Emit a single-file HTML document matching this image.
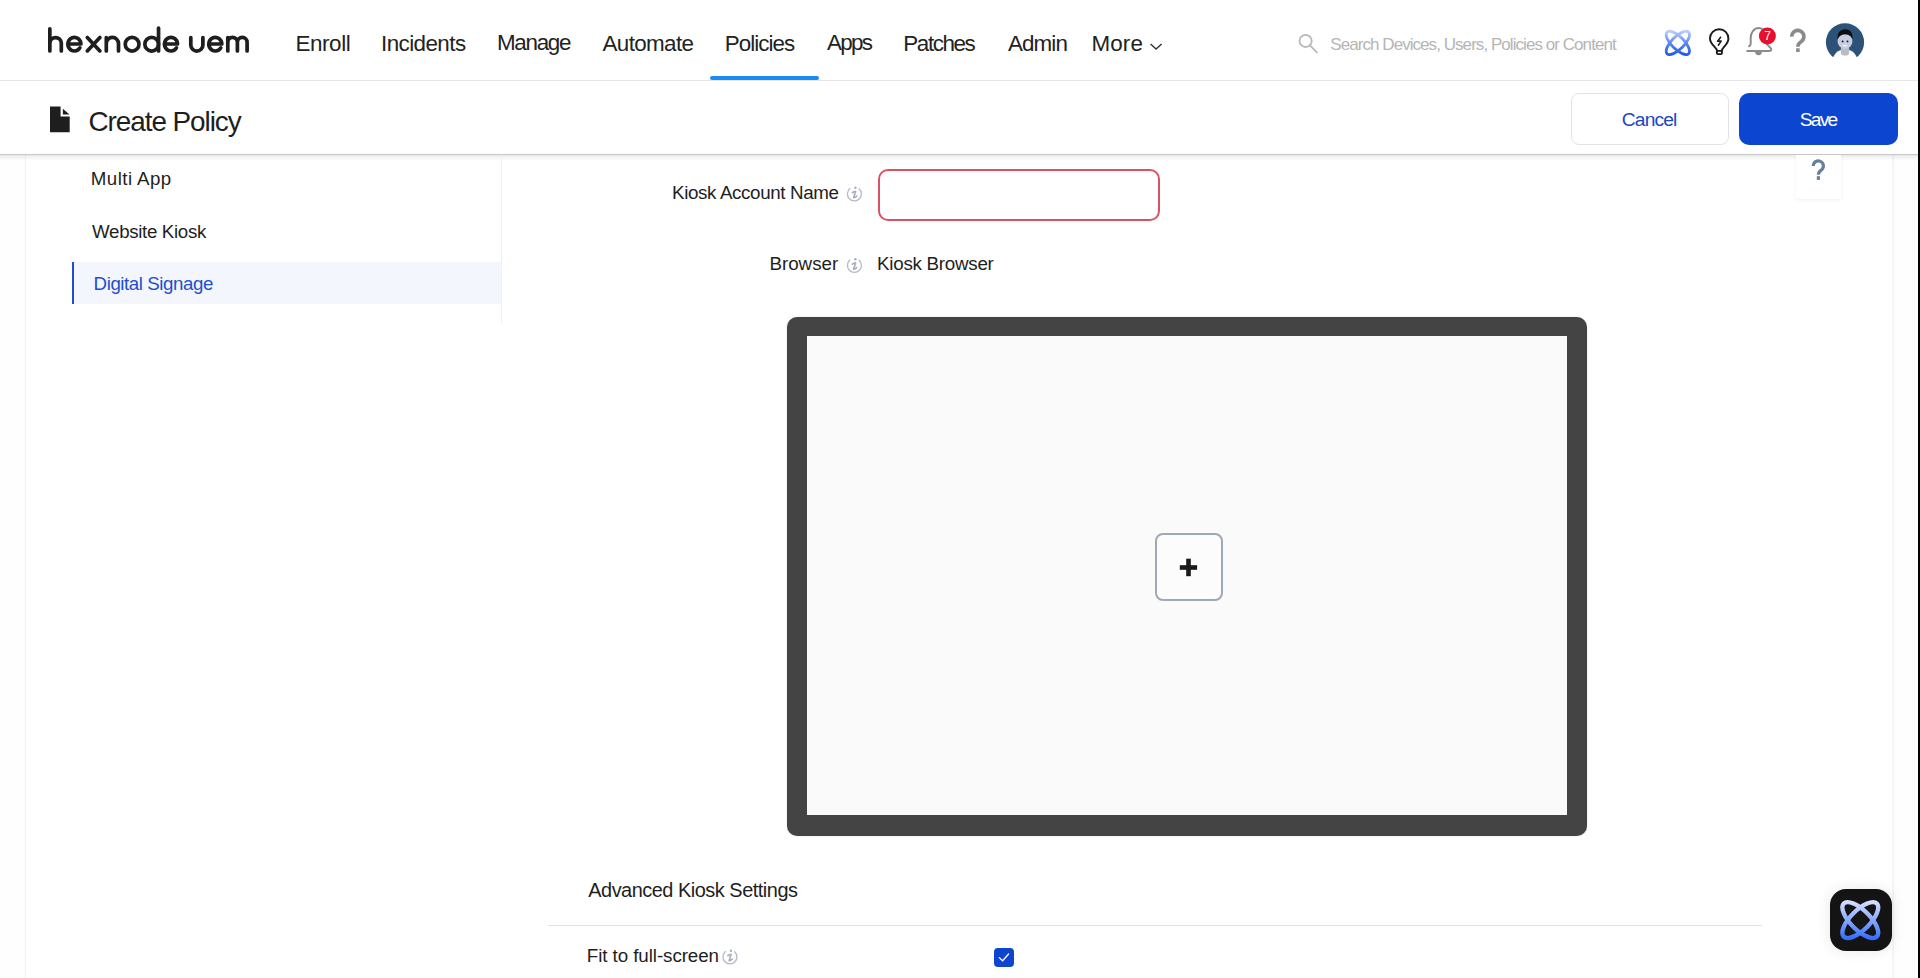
<!DOCTYPE html>
<html>
<head>
<meta charset="utf-8">
<title>Create Policy - Hexnode UEM</title>
<style>
html,body{margin:0;padding:0;}
body{width:1920px;height:978px;overflow:hidden;position:relative;background:#ffffff;font-family:"Liberation Sans",sans-serif;}
.t{position:absolute;white-space:nowrap;line-height:1;font-family:"Liberation Sans",sans-serif;}
.abs{position:absolute;}
#topnav{position:absolute;left:0;top:0;width:1918px;height:80px;background:#fff;border-bottom:1px solid #e6e6e6;}
#navbar-active{position:absolute;left:710px;top:76px;width:109px;height:4px;border-radius:2px;background:#1b8bf2;}
#subhead{position:absolute;left:0;top:81px;width:1918px;height:73px;background:#fff;}
#subhead-line{position:absolute;left:0;top:154px;width:1918px;height:1px;background:#c9c9c9;}
#subhead-shadow{position:absolute;left:0;top:155px;width:1918px;height:6px;background:linear-gradient(to bottom, rgba(0,0,0,0.10) 0px, rgba(0,0,0,0.055) 1.5px, rgba(0,0,0,0.035) 3px, rgba(0,0,0,0.015) 4.5px, rgba(0,0,0,0) 6px);}
#leftgutter{position:absolute;left:0;top:155px;width:25px;height:823px;background:#fefefe;}
#panel{position:absolute;left:25px;top:155px;width:1866px;height:823px;background:#fff;border-left:1px solid #f2f2f2;border-right:2px solid #f5f5f5;box-shadow:0 0 3px rgba(0,0,0,0.025);}
#rightgutter{position:absolute;left:1894px;top:155px;width:24px;height:823px;background:#fefefe;}
#sideborder{position:absolute;left:501px;top:155px;width:1px;height:168px;background:#eef0f3;}
#active-item{position:absolute;left:72px;top:262px;width:429px;height:42px;background:#f3f6fc;}
#active-bar{position:absolute;left:72px;top:262px;width:2px;height:42px;background:#1d4fd0;}
#edge{position:absolute;left:1918px;top:0;width:2px;height:978px;background:#000;}
#cancel{position:absolute;left:1571px;top:93px;width:156px;height:50px;border:1px solid #e3e3e3;border-radius:8px;background:#fff;}
#save{position:absolute;left:1739px;top:93px;width:159px;height:52px;border-radius:10px;background:#0c45d0;}
#input{position:absolute;left:877.5px;top:169px;width:278px;height:48px;border:2px solid #db5266;border-radius:10px;background:#fff;}
#frame{position:absolute;left:787px;top:317px;width:800px;height:519px;border-radius:10px;background:#444444;box-shadow:0 0 2px rgba(0,0,0,0.15);}
#screen{position:absolute;left:807px;top:336px;width:760px;height:479px;background:#fafafa;}
#plusbtn{position:absolute;left:1155px;top:533px;width:64px;height:64px;border:2px solid #a0a7b8;border-radius:8px;background:#fcfcfc;}
#divider{position:absolute;left:548px;top:925px;width:1214px;height:1px;background:#e3e3e3;}
#checkbox{position:absolute;left:994px;top:948px;width:20px;height:19px;border-radius:4px;background:#0d45d0;}
#helpbox{position:absolute;left:1796px;top:155px;width:45px;height:44px;background:#fff;box-shadow:0 1px 4px rgba(0,0,0,0.06);}
#chatbtn{position:absolute;left:1829.5px;top:889px;width:62px;height:62px;border-radius:16px;background:#141414;box-shadow:0 0 14px rgba(0,0,0,0.10);}
</style>
</head>
<body>
<div id="topnav"></div>
<div id="navbar-active"></div>
<div id="subhead"></div>
<div id="leftgutter"></div>
<div id="rightgutter"></div>
<div id="panel"></div>
<div id="subhead-line"></div>
<div id="subhead-shadow"></div>
<div id="sideborder"></div>
<div id="active-item"></div>
<div id="active-bar"></div>
<div id="cancel"></div>
<div id="save"></div>
<div id="input"></div>
<div id="frame"></div>
<div id="screen"></div>
<div id="plusbtn"></div>
<div id="divider"></div>
<div id="checkbox"></div>
<div id="helpbox"></div>
<div id="chatbtn"></div>
<svg class="abs" style="left:0;top:0;overflow:visible" width="1920" height="978" viewBox="0 0 1920 978">
<defs>
<linearGradient id="gAtom" gradientUnits="userSpaceOnUse" x1="0" y1="30" x2="0" y2="56">
<stop offset="0" stop-color="#c3d2fb"/>
<stop offset="0.5" stop-color="#5b88f5"/>
<stop offset="1" stop-color="#1d55ea"/>
</linearGradient>
<linearGradient id="gAtom2" gradientUnits="userSpaceOnUse" x1="0" y1="900" x2="0" y2="941">
<stop offset="0" stop-color="#dbe3ff"/>
<stop offset="0.45" stop-color="#90aefc"/>
<stop offset="1" stop-color="#2a66ff"/>
</linearGradient>
</defs>
<!-- logo -->
<g fill="none" stroke="#1e1e1e" stroke-width="3.7" stroke-linecap="round" stroke-linejoin="round">
<path d="M49.85,28.8 V51 M49.85,43.1 A5.73,5.73 0 0 1 61.3,43.1 V51"/>
<path d="M67.9,44 H80.9 A6.5,6.85 0 1 0 79.85,47.9"/>
<path d="M87.3,37.5 L99.9,50.9 M99.9,37.5 L87.3,50.9"/>
<path d="M106.3,37.5 V51 M106.3,43.5 A6.1,6.1 0 0 1 118.5,43.5 V51"/>
<ellipse cx="132.1" cy="44.2" rx="6.87" ry="6.85"/>
<ellipse cx="151.7" cy="44.2" rx="6.85" ry="6.85"/>
<path d="M158.55,28.2 V51"/>
<path d="M164.6,44 H177.5 A6.5,6.85 0 1 0 176.45,47.9"/>
<path d="M190.8,37.6 V45 A6.05,6.05 0 0 0 202.9,45 V37.6"/>
<path d="M208.8,44 H221.8 A6.5,6.85 0 1 0 220.75,47.9"/>
<path d="M227.8,37.5 V51 M227.8,42.2 A4.8,4.8 0 0 1 237.4,42.2 V51 M237.4,42.2 A4.85,4.85 0 0 1 247.1,42.2 V51"/>
</g>
<!-- More chevron -->
<path d="M1150.6,44 L1156.1,49 L1161.6,44" fill="none" stroke="#333" stroke-width="1.4"/>
<!-- search icon -->
<g fill="none" stroke="#b9b9b9" stroke-width="1.8" stroke-linecap="round">
<circle cx="1305.6" cy="40.9" r="6.1"/>
<path d="M1310.2,45.6 L1316.9,52.3"/>
</g>
<!-- atom header -->
<g fill="none" stroke="url(#gAtom)" stroke-width="2.8">
<path d="M1667.10,32.15 A15.2,6.3 45 0 1 1688.60,53.65 A15.2,6.3 45 0 1 1667.10,32.15 Z"/>
<path d="M1667.10,53.65 A15.2,6.3 -45 0 1 1688.60,32.15 A15.2,6.3 -45 0 1 1667.10,53.65 Z"/>
</g>
<!-- bulb -->
<g fill="none" stroke="#1a1a1a" stroke-width="1.9" stroke-linecap="round" stroke-linejoin="round">
<path d="M1716.9,50.5 C1716.9,47.6 1710,44.6 1710,38.5 A9.2,9.3 0 0 1 1728.4,38.5 C1728.4,44.6 1721.9,47.6 1721.9,50.5"/>
<path d="M1716.9,50.9 V53 Q1716.9,54.1 1718,54.1 H1720.8 Q1721.9,54.1 1721.9,53 V50.9 Z"/>
<path d="M1720.6,37.2 L1717.6,41.3 L1721.2,41.1 L1718.3,45.2" stroke-width="1.5"/>
</g>
<!-- bell -->
<g fill="none" stroke="#8c8c8c" stroke-width="2" stroke-linecap="round" stroke-linejoin="round">
<path d="M1749.2,46.2 Q1750.7,45.4 1750.7,43.5 V37.6 A8,9.6 0 0 1 1766.7,37.6 V43.8 L1770.9,48.4 Q1771.9,50.9 1769.6,50.9 H1747.2"/>
</g>
<path d="M1755.1,51.5 A3.4,3.8 0 0 0 1761.9,51.5 Z" fill="#8c8c8c"/>
<circle cx="1767.4" cy="35.9" r="8.5" fill="#e8112d"/>
<text x="1767.6" y="40.2" font-family="Liberation Sans" font-size="12" fill="#fff" text-anchor="middle">7</text>
<!-- header question -->
<g fill="none" stroke="#8a8a8a" stroke-width="3.6">
<path d="M1791.8,36.6 A6.05,6.1 0 1 1 1801.3,41.5 Q1797.9,43.6 1797.9,46.8"/>
</g>
<rect x="1796.1" y="48.3" width="3.6" height="3.7" fill="#8a8a8a"/>
<!-- avatar -->
<circle cx="1845" cy="42.3" r="19.1" fill="#2c5377"/>
<circle cx="1845" cy="61.7" r="12.5" fill="#ffffff"/>
<rect x="1820" y="58.2" width="50" height="8" fill="#ffffff"/>
<rect x="1840.8" y="46" width="8.4" height="9.5" rx="3" fill="#b9bdc7"/>
<ellipse cx="1845" cy="41.6" rx="7.4" ry="7.4" fill="#c8cde0"/>
<path d="M1837.6,39.5 C1836.8,32.5 1841,29 1845.5,29.3 C1850.2,29.5 1853.2,33 1852.4,39 C1851.2,35.3 1848.6,34.2 1845,34.2 C1841.5,34.2 1839,35.6 1837.6,39.5 Z" fill="#0e0e0e"/>
<circle cx="1842.6" cy="41.4" r="0.95" fill="#111"/>
<circle cx="1847.5" cy="41.4" r="0.95" fill="#111"/>
<path d="M1842.4,45 Q1845,48.2 1847.7,45 Z" fill="#f4f6fb"/>
<!-- doc icon -->
<path d="M50,106.5 H60.6 V116.5 H69.7 V132.3 H50 Z" fill="#1e1e1e"/>
<path d="M62.9,108.8 L69.4,114.5 H62.9 Z" fill="#1e1e1e"/>
<!-- info icons -->
<defs>
<g id="info">
<path d="M-4.6,-5.7 A7,7 0 1 0 4.6,-5.6" fill="none" stroke="#b3b9c6" stroke-width="1.3" stroke-linecap="round"/>
<path d="M-2.1,-1.6 Q-0.8,-2.9 1.1,-3 L-0.9,3.4 Q0.5,3.6 2.2,1.9" fill="none" stroke="#a9b0c2" stroke-width="1.7" stroke-linecap="round" stroke-linejoin="round"/>
<circle cx="0.9" cy="-6.5" r="1.25" fill="#a9b0c2"/>
</g>
</defs>
<use href="#info" x="854.5" y="194.3"/>
<use href="#info" x="854.5" y="265.8"/>
<use href="#info" x="730" y="957.3"/>
<!-- plus -->
<rect x="1179.8" y="565.2" width="17.3" height="4.6" fill="#1a1a1a"/>
<rect x="1186.2" y="558.7" width="4.6" height="17.5" fill="#1a1a1a"/>
<!-- checkbox tick -->
<path d="M999.3,957.6 L1002.6,960.8 L1008.6,954" fill="none" stroke="#fff" stroke-width="1.3" stroke-linecap="round" stroke-linejoin="round"/>
<!-- help ? -->
<g fill="none" stroke="#6a7fa0" stroke-width="3.2">
<path d="M1813.3,166 A5.05,5.05 0 1 1 1821.6,169.8 Q1818.4,171.8 1818.4,174.8"/>
</g>
<rect x="1816.8" y="176.2" width="3.2" height="3.7" fill="#6a7fa0"/>
<!-- chat atom -->
<g fill="none" stroke="url(#gAtom2)" stroke-width="4.4">
<path d="M1843.75,903.55 A23.4,9.7 45 0 1 1876.85,936.65 A23.4,9.7 45 0 1 1843.75,903.55 Z"/>
<path d="M1843.75,936.65 A23.4,9.7 -45 0 1 1876.85,903.55 A23.4,9.7 -45 0 1 1843.75,936.65 Z"/>
</g>
</svg>

<div class="t" style="left:295.41px;top:32.64px;font-size:22.40px;letter-spacing:-0.377px;color:#222222">Enroll</div>
<div class="t" style="left:381.08px;top:32.64px;font-size:22.40px;letter-spacing:-0.577px;color:#222222">Incidents</div>
<div class="t" style="left:497.01px;top:32.14px;font-size:22.40px;letter-spacing:-1.285px;color:#222222">Manage</div>
<div class="t" style="left:602.50px;top:32.64px;font-size:22.40px;letter-spacing:-0.625px;color:#222222">Automate</div>
<div class="t" style="left:724.71px;top:32.64px;font-size:22.40px;letter-spacing:-0.956px;color:#222222">Policies</div>
<div class="t" style="left:826.90px;top:32.14px;font-size:22.40px;letter-spacing:-1.625px;color:#222222">Apps</div>
<div class="t" style="left:903.31px;top:32.64px;font-size:22.40px;letter-spacing:-1.400px;color:#222222">Patches</div>
<div class="t" style="left:1007.90px;top:32.64px;font-size:22.40px;letter-spacing:-0.862px;color:#222222">Admin</div>
<div class="t" style="left:1091.41px;top:32.64px;font-size:22.40px;letter-spacing:0.147px;color:#222222">More</div>
<div class="t" style="left:1330.35px;top:36.21px;font-size:17.00px;letter-spacing:-0.944px;color:#b5b5b5">Search Devices, Users, Policies or Content</div>
<div class="t" style="left:88.51px;top:108.08px;font-size:27.90px;letter-spacing:-1.061px;color:#1e1e1e">Create Policy</div>
<div class="t" style="left:1621.84px;top:109.55px;font-size:19.20px;letter-spacing:-0.840px;color:#1a47c2">Cancel</div>
<div class="t" style="left:1799.84px;top:109.55px;font-size:19.20px;letter-spacing:-1.785px;color:#ffffff">Save</div>
<div class="t" style="left:90.80px;top:170.37px;font-size:18.70px;letter-spacing:0.448px;color:#1e1e1e">Multi App</div>
<div class="t" style="left:92.11px;top:223.17px;font-size:18.70px;letter-spacing:-0.325px;color:#1e1e1e">Website Kiosk</div>
<div class="t" style="left:93.60px;top:275.37px;font-size:18.70px;letter-spacing:-0.430px;color:#1d4fd0">Digital Signage</div>
<div class="t" style="left:672.10px;top:183.59px;font-size:18.80px;letter-spacing:-0.381px;color:#1e1e1e">Kiosk Account Name</div>
<div class="t" style="left:769.50px;top:254.69px;font-size:18.80px;letter-spacing:-0.036px;color:#1e1e1e">Browser</div>
<div class="t" style="left:877.10px;top:255.09px;font-size:18.80px;letter-spacing:-0.271px;color:#1e1e1e">Kiosk Browser</div>
<div class="t" style="left:588.25px;top:881.25px;font-size:19.90px;letter-spacing:-0.470px;color:#1e1e1e">Advanced Kiosk Settings</div>
<div class="t" style="left:586.75px;top:946.89px;font-size:18.80px;letter-spacing:-0.076px;color:#1e1e1e">Fit to full-screen</div>
<div id="edge"></div>
</body>
</html>
